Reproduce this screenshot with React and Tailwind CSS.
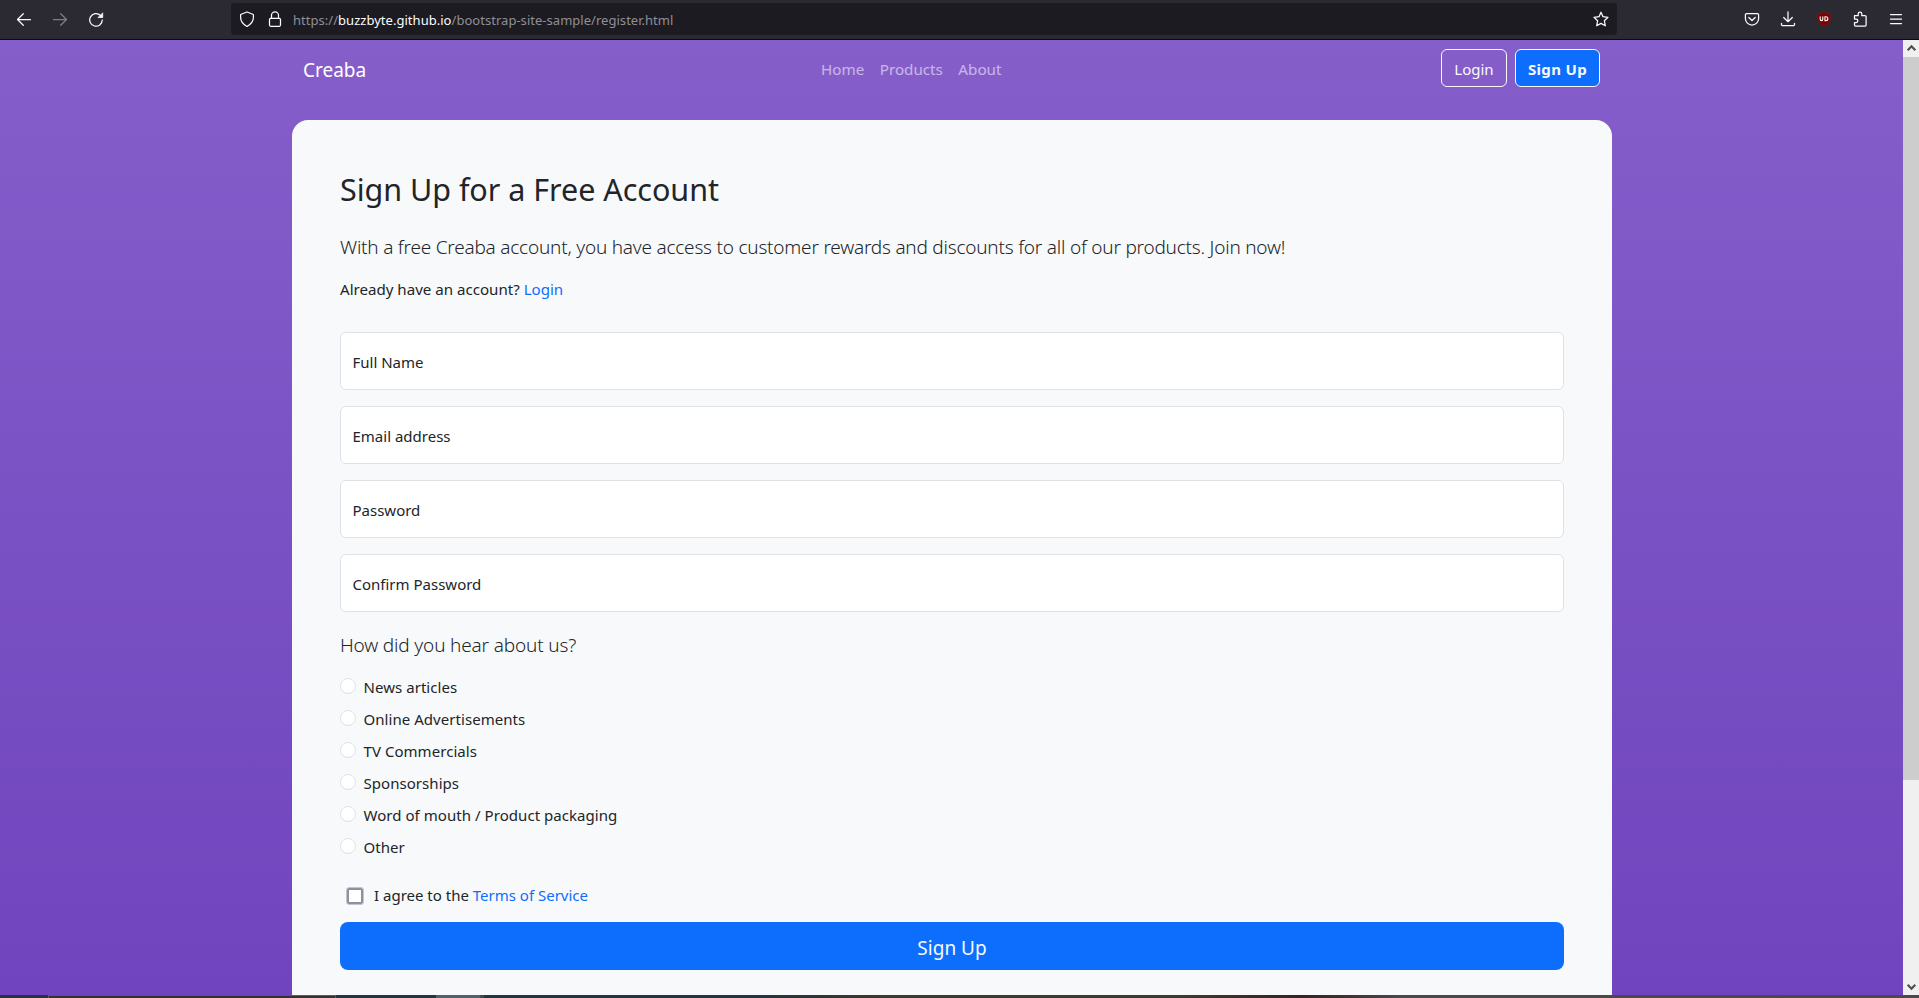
const Glyph = ({ children, className = "" }) => (
  <svg
    viewBox="0 0 16 16"
    width="16"
    height="16"
    fill="none"
    stroke="#fbfbfe"
    strokeWidth="1.25"
    strokeLinecap="round"
    strokeLinejoin="round"
    className={"shrink-0 " + className}
  >
    {children}
  </svg>
);

function Toolbar() {
  return (
    <header className="flex h-10 shrink-0 items-center justify-between border-b border-[#0c0c0d] bg-[#2b2a33] pr-[15px] pb-px">
      <div className="flex w-[231px] items-center gap-5 pl-4">
        <Glyph><path d="M14.500 8.500h-13M7.300 2.700 1.500 8.500l5.800 5.800" /></Glyph>
        <Glyph className="opacity-40"><path d="M1.500 8.500h13M8.700 2.700l5.800 5.800-5.800 5.800" /></Glyph>
        <Glyph>
          <path d="M14.300 9A6.300 6.300 0 1 1 12.300 4.300" />
          <path d="M14.700 2.200v4.300h-4.300z" fill="#fbfbfe" strokeWidth="0.8" />
        </Glyph>
      </div>
      <div className="flex h-8 w-[1386px] items-center rounded bg-[#1c1b22] px-2">
        <Glyph><path d="M8 1 14.400 3.500v2.800c0 4-2.400 7-6.400 9.200-4-2.200-6.400-5.200-6.400-9.200V3.500z" /></Glyph>
        <Glyph className="ml-3">
          <rect x="2.500" y="7.300" width="11" height="8" rx="1.200" />
          <path d="M4.500 7.300V4.300a3.500 3.500 0 0 1 7 0v3" />
        </Glyph>
        <span className="ml-[10px] pt-0.5 text-[13px] tracking-[0.03px] whitespace-pre text-[#8f8f96]">
          https://<span className="text-[#fbfbfe]">buzzbyte.github.io</span>/bootstrap-site-sample/register.html
        </span>
        <Glyph className="ml-auto">
          <path d="M8 1.200l2 4.500 5 .6-3.600 3.500.9 5L8 12.400l-4.300 2.400.9-5L1 6.300l5-.6z" />
        </Glyph>
      </div>
      <div className="ml-auto flex items-center gap-5">
        <Glyph>
          <path d="M2.600 2.600h10.800a1.200 1.200 0 0 1 1.200 1.200v3.700a6.600 6.600 0 0 1-13.200 0V3.800a1.200 1.200 0 0 1 1.200-1.200z" />
          <path d="M4.800 6.500 8 9.500l3.200-3" />
        </Glyph>
        <Glyph><path d="M8 .8v9.700M3.700 6.500 8 10.700l4.300-4.200M1.500 12.300v1.200a1.200 1.200 0 0 0 1.200 1.200h10.600a1.200 1.200 0 0 0 1.200-1.200v-1.200" /></Glyph>
        <Glyph>
          <path d="M8 .8c2 1.500 4 2 6.500 2.200v4c0 4-2.500 6.500-6.500 8.600C4 13.500 1.500 11 1.500 7V3C4 2.800 6 2.300 8 .8z" fill="#800000" stroke="#5c2028" strokeWidth="1" />
          <path d="M4.200 5.700v2.600a1.300 1.300 0 0 0 2.600 0V5.700M8.900 5.700h1a1.900 1.900 0 0 1 0 3.900h-1z" strokeWidth="1.100" />
        </Glyph>
        <Glyph>
          <path d="M2.500 4.700h3.700V3a1.800 1.800 0 0 1 3.600 0v1.700h3.300a1 1 0 0 1 1 1v8.400a1 1 0 0 1-1 1H3.500a1 1 0 0 1-1-1v-2.600h1.600a1.700 1.700 0 0 0 0-3.500H2.500z" />
        </Glyph>
        <Glyph><path d="M2.500 3.500h11M2.500 8h11M2.500 12.500h11" /></Glyph>
      </div>
    </header>
  );
}

function Scrollbar() {
  return (
    <div className="flex w-4 shrink-0 flex-col bg-[#f0f0f0]">
      <svg viewBox="0 0 16 17" className="h-[17px] w-4" fill="none" stroke="#505050" strokeWidth="2.200">
        <path d="M4.700 10.300 8.500 6.300l3.800 4" />
      </svg>
      <div className="h-[723px] bg-[#cdcdcd]" />
      <svg viewBox="0 0 16 17" className="mt-auto h-[17px] w-4" fill="none" stroke="#505050" strokeWidth="2.200">
        <path d="M4.700 6.700 8.500 10.700l3.800-4" />
      </svg>
    </div>
  );
}

function Taskbar() {
  return (
    <div className="flex h-[3px] shrink-0 bg-[#4a484a]">
      <div className="w-12 bg-[#203540]" />
      <div className="w-[288px] border-t border-r border-l border-[#5c5a5b] bg-[#333233]" />
      <div className="w-[100px] bg-[#203640]" />
      <div className="w-11 bg-[#4d626a]" />
      <div className="w-1 bg-[#3c4a52]" />
      <div className="w-[276px] bg-[#203640]" />
      <div className="w-[120px] bg-linear-to-r from-[#203640] to-[#3d3828]" />
      <div className="w-[300px] bg-[#3d3b2e]" />
      <div className="w-[122px] bg-linear-to-r from-[#3d3b2e] to-[#38231f]" />
      <div className="w-[100px] bg-linear-to-r from-[#38231f] to-[#4a484a]" />
    </div>
  );
}

const fields = ["Full Name", "Email address", "Password", "Confirm Password"];
const sources = [
  "News articles",
  "Online Advertisements",
  "TV Commercials",
  "Sponsorships",
  "Word of mouth / Product packaging",
  "Other",
];

function Navbar() {
  return (
    <nav className="flex h-20 shrink-0 items-start px-[11px] pt-[9px]">
      <a className="mt-[9px] w-[518px] text-[19px] text-white">Creaba</a>
      <div className="mt-2 flex gap-[15.5px] text-[15.2px] text-white/55">
        <a>Home</a>
        <a>Products</a>
        <a>About</a>
      </div>
      <div className="mr-px ml-auto flex gap-2 text-[#f8f9fa]">
        <button className="flex h-[38px] w-[66px] items-center justify-center rounded-md border border-[#f8f9fa] pt-0.5">Login</button>
        <button className="flex h-[38px] w-[85px] items-center justify-center rounded-md border border-[#f8f9fa] bg-[#0d6efd] pt-0.5 font-bold tracking-[0.35px] whitespace-nowrap">
          Sign Up
        </button>
      </div>
    </nav>
  );
}

function RegisterForm() {
  return (
    <form className="flex flex-col">
      <div className="flex flex-col gap-4">
        {fields.map((label) => (
          <label key={label} className="flex h-[58px] items-center rounded-md border border-[#dee2e6] bg-white pt-px pl-[11.5px]">
            {label}
          </label>
        ))}
      </div>
      <h2 className="mt-[21px] text-[19px] leading-6 font-light tracking-[-0.16px]">How did you hear about us?</h2>
      <div className="mt-[18px] flex flex-col gap-2">
        {sources.map((label) => (
          <label key={label} className="flex h-6 items-start gap-[7.5px] tracking-[0.05px]">
            <span className="mt-[3px] size-4 rounded-full border border-[#dee2e6] bg-white" />
            {label}
          </label>
        ))}
      </div>
      <label className="mt-6 flex h-[25px] items-start pl-[6px]">
        <span className="mt-1 mr-[10px] size-[18px] rounded-[3px] border border-[#c4c4cd]">
          <span className="block size-4 rounded-[2px] border-2 border-[#8f8f9d] bg-white" />
        </span>
        <span>I agree to the <a className="text-[#0d6efd]">Terms of Service</a></span>
      </label>
      <button type="button" className="mt-[14px] flex h-12 items-center justify-center rounded-lg bg-[#0d6efd] pt-[3px] text-[19px] text-[#f8f9fa]">
        Sign Up
      </button>
    </form>
  );
}

export default function App() {
  return (
    <div className="flex h-[998px] w-[1919px] flex-col overflow-hidden font-['Noto_Sans',sans-serif] text-[15px] leading-6 text-[#212529]">
      <Toolbar />
      <div className="flex h-[955px] shrink-0">
        <main className="flex grow flex-col bg-linear-to-b from-[#855eca] to-[#7044be] pr-[291px] pl-[292px]">
          <Navbar />
          <section className="grow rounded-t-2xl bg-[#f8f9fa] px-12 pt-[50px]">
            <h1 className="text-[30.5px] leading-[38px] tracking-[-0.03px]">Sign Up for a Free Account</h1>
            <p className="mt-[27px] text-[19px] leading-6 font-light tracking-[-0.215px]">
              With a free Creaba account, you have access to customer rewards and discounts for all of our products. Join now!
            </p>
            <p className="mt-[18px] mb-[31px] text-[15.1px]">
              Already have an account? <a className="text-[#0d6efd]">Login</a>
            </p>
            <RegisterForm />
          </section>
        </main>
        <Scrollbar />
      </div>
      <Taskbar />
    </div>
  );
}
